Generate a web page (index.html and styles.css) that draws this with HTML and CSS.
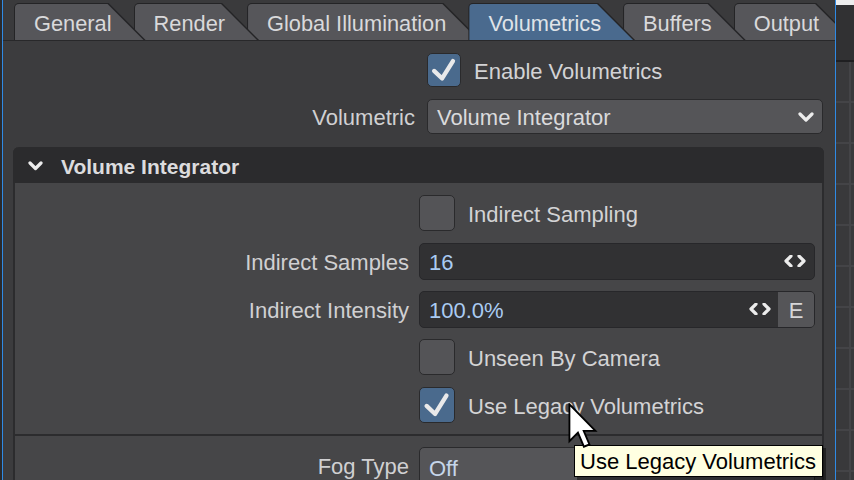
FILE: index.html
```html
<!DOCTYPE html>
<html>
<head>
<meta charset="utf-8">
<link rel="stylesheet" href="styles.css">
</head>
<body>
<div class="app">
  <div class="edge-left"></div>
  <div class="panel">
    <div class="tabbar">
      <div class="tab"><div class="tab-face">General</div></div>
      <div class="tab"><div class="tab-face">Render</div></div>
      <div class="tab"><div class="tab-face">Global Illumination</div></div>
      <div class="tab active"><div class="tab-face">Volumetrics</div></div>
      <div class="tab"><div class="tab-face">Buffers</div></div>
      <div class="tab"><div class="tab-face">Output</div></div>
    </div>
    <div class="content">
      <div class="row top-row row-cb-top">
        <div class="label"></div>
        <div class="cb cb-top on">
          <svg viewBox="0 0 34 34" class="check"><polyline points="6.5,18 15,26 26.5,7.5"/></svg>
        </div>
        <span class="cb-text">Enable Volumetrics</span>
      </div>
      <div class="row top-row row-dd">
        <div class="label">Volumetric</div>
        <div class="dropdown">
          <span class="txt">Volume Integrator</span>
          <svg class="chev" viewBox="0 0 16 10"><polyline points="2,2 8,8 14,2"/></svg>
        </div>
      </div>

      <div class="section">
        <div class="section-head">
          <svg class="head-chev" viewBox="0 0 15 10"><polyline points="2,2 7.5,7.5 13,2"/></svg>
          <span class="txt">Volume Integrator</span>
        </div>
        <div class="section-body">
          <div class="row sec-row">
            <div class="label"></div>
            <div class="cb"></div>
            <span class="cb-text">Indirect Sampling</span>
          </div>
          <div class="row sec-row">
            <div class="label">Indirect Samples</div>
            <div class="field">
              <span class="value">16</span>
              <svg class="arrows" viewBox="0 0 22 12"><polyline points="7,1 2,6 7,11"/><polyline points="15,1 20,6 15,11"/></svg>
            </div>
          </div>
          <div class="row sec-row">
            <div class="label">Indirect Intensity</div>
            <div class="field">
              <span class="value">100.0%</span>
              <svg class="arrows arrows-e" viewBox="0 0 22 12"><polyline points="7,1 2,6 7,11"/><polyline points="15,1 20,6 15,11"/></svg>
              <span class="ebtn">E</span>
            </div>
          </div>
          <div class="row sec-row">
            <div class="label"></div>
            <div class="cb"></div>
            <span class="cb-text">Unseen By Camera</span>
          </div>
          <div class="row sec-row">
            <div class="label"></div>
            <div class="cb on">
              <svg viewBox="0 0 36 36" class="check"><polyline points="7,19 16,27.5 28,8"/></svg>
            </div>
            <span class="cb-text">Use Legacy Volumetrics</span>
          </div>
        </div>
        <div class="section-body section-next">
          <div class="row sec-row">
            <div class="label">Fog Type</div>
            <div class="dropdown fog">
              <span class="fog-value">Off</span>
            </div>
          </div>
        </div>
      </div>
    </div>
  </div>
  <div class="edge-right">
    <div class="er-top"></div>
    <div class="er-bar"></div>
    <div class="er-grid"></div>
  </div>
</div>

<div class="tooltip">Use Legacy Volumetrics</div>
<svg class="cursor" viewBox="0 0 13 20"><path d="M0.6,0.6 L0.6,16.6 L4.3,12.9 L6.9,19 L9.3,18 L6.8,12.1 L11.9,12.1 Z"/></svg>
</body>
</html>
```

FILE: styles.css
```css
* { box-sizing: border-box; }
html, body { margin: 0; padding: 0; }
body {
  width: 854px;
  height: 480px;
  overflow: hidden;
  position: relative;
  background: #2c2c2e;
  font-family: "Liberation Sans", Arial, sans-serif;
  font-size: 22px;
  color: #d2d2d4;
}
.app { display: flex; height: 480px; }
.edge-left { width: 2px; flex: none; background: #2a2a2c; }
.panel {
  width: 834px;
  flex: none;
  border-left: 1px solid #2f8ae4;
  border-right: 1px solid #2f8ae4;
  background: #3c3c3e;
  display: flex;
  flex-direction: column;
  overflow: hidden;
}

/* tabs */
.tabbar {
  height: 41px;
  flex: none;
  display: flex;
  padding: 3px 0 0 11px;
  background: #3a3a3c;
  border-bottom: 1px solid #28282a;
}
.tab {
  position: relative;
  flex: none;
  height: 37px;
  margin-right: -12px;
  padding: 1px 2px 0 1px;
  background: #242426;
  border-radius: 5px 0 0 0;
  clip-path: polygon(0 0, calc(100% - 37px) 0, 100% 100%, 0 100%);
}
.tab:nth-child(1) { z-index: 6; }
.tab:nth-child(2) { z-index: 5; }
.tab:nth-child(3) { z-index: 4; }
.tab:nth-child(4) { z-index: 3; }
.tab:nth-child(5) { z-index: 2; }
.tab:nth-child(6) { z-index: 1; }
.tab.active { z-index: 10; }
.tab-face {
  height: 100%;
  display: flex;
  align-items: center;
  padding: 3px 32px 0 19px;
  background: #56565a;
  border-radius: 4px 0 0 0;
  clip-path: polygon(0 0, calc(100% - 36px) 0, 100% 100%, 0 100%);
  font-size: 21.8px;
  color: #d9d9db;
  white-space: nowrap;
}
.tab.active .tab-face { background: #4a6a8e; color: #dfe3e8; }

/* content */
.content {
  display: flex;
  flex-direction: column;
  padding-top: 12px;
}
.row { display: flex; align-items: center; flex: none; }
.label, .cb-text, .value, .txt, .fog-value, .ebtn { padding-top: 3px; }
.label {
  flex: none;
  text-align: right;
  white-space: nowrap;
  color: #d0d0d2;
}
.top-row .label { width: 412px; margin-right: 12px; }
.row-cb-top { height: 34px; }
.row-dd { height: 35px; margin-top: 12px; }
.row-dd .dropdown { height: 35px; }

.cb {
  width: 36px;
  height: 36px;
  flex: none;
  border-radius: 5px;
  border: 1px solid #2a2a2c;
  background: #545457;
  display: flex;
}
.cb-top { width: 34px; height: 34px; }
.cb.on { background: #4a6a8d; }
.check { width: 100%; height: 100%; }
.check polyline {
  fill: none;
  stroke: #e9e9ea;
  stroke-width: 4.6;
  stroke-linecap: round;
  stroke-linejoin: round;
}
.cb-text { margin-left: 13px; white-space: nowrap; color: #d3d3d5; }

.dropdown {
  width: 396px;
  height: 36px;
  flex: none;
  display: flex;
  align-items: center;
  padding: 0 8px 0 9px;
  background: #555558;
  border: 1px solid #2a2a2c;
  border-radius: 5px;
  color: #dadadc;
}
.chev { width: 16px; height: 10px; margin-left: auto; }
.chev polyline, .head-chev polyline, .arrows polyline {
  fill: none;
  stroke: #ececec;
  stroke-width: 3.2;
  stroke-linecap: round;
  stroke-linejoin: round;
}

/* section */
.section {
  width: 811px;
  margin: 13px 0 0 10px;
  background: #464648;
  border-left: 2px solid #2c2c2e;
  border-right: 2px solid #2c2c2e;
  border-radius: 6px 6px 0 0;
}
.section-head {
  height: 36px;
  margin: 0 -2px;
  display: flex;
  align-items: center;
  padding-left: 15px;
  background: #2b2b2d;
  border-radius: 6px 6px 0 0;
  font-weight: bold;
  font-size: 21px;
  color: #dcdcde;
}
.head-chev { width: 15px; height: 10px; margin-right: 18px; margin-top: 1px; }
.section-body {
  display: flex;
  flex-direction: column;
  gap: 12px;
  padding: 12px 0 11px;
}
.section-next {
  border-top: 2px solid #2c2c2e;
  padding-top: 11px;
}
.sec-row { height: 36px; }
.sec-row .label { width: 394px; margin-right: 10px; }

.field {
  width: 396px;
  height: 37px;
  flex: none;
  display: flex;
  align-items: center;
  padding-left: 9px;
  background: #313133;
  border: 1px solid #27272a;
  border-radius: 5px;
  overflow: hidden;
}
.value { color: #aacbf2; }
.arrows { width: 22px; height: 12px; margin-left: auto; margin-right: 8px; }
.arrows-e { margin-right: 7px; }
.ebtn {
  align-self: stretch;
  width: 36px;
  display: flex;
  align-items: center;
  justify-content: center;
  background: #555558;
  color: #d6d6d8;
}
.fog { align-self: flex-start; margin-top: 0; height: 40px; }
.fog-value { color: #c6d6ea; }

/* right pane */
.edge-right {
  width: 18px;
  flex: none;
  display: flex;
  flex-direction: column;
  background: #38383a;
}
.er-top { height: 5px; background: #ededee; }
.er-bar { height: 57px; background: #313133; border-bottom: 2px solid #1f1f21; }
.er-grid {
  flex: 1;
  background-color: #39393b;
  background-image:
    repeating-linear-gradient(to bottom, transparent 0 39px, #444447 39px 41px),
    linear-gradient(to right, transparent 13px, #444447 13px 15px, transparent 15px);
}

/* overlays */
.tooltip {
  position: absolute;
  left: 574px;
  top: 445px;
  height: 32px;
  padding: 1px 6px 0 5px;
  line-height: 30px;
  background: #ffffe1;
  border: 1px solid #000;
  color: #000;
  font-size: 22px;
  white-space: nowrap;
  box-shadow: 3px 3px 0 rgba(0, 0, 0, 0.45);
}
.cursor {
  position: absolute;
  left: 568px;
  top: 403px;
  width: 30px;
  height: 46px;
}
.cursor path { fill: #fff; stroke: #000; stroke-width: 0.8; stroke-linejoin: miter; }
```
